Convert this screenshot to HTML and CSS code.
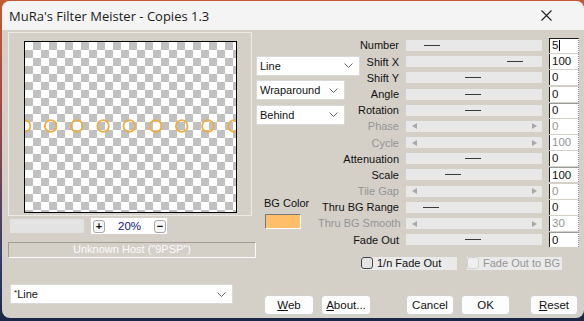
FILE: index.html
```html
<!DOCTYPE html>
<html lang="en">
<head>
    <meta charset="UTF-8">
    <title>MuRa's Filter Meister - Copies 1.3</title>
    <link rel="stylesheet" href="styles.css">
</head>
<body>
    <div class="window">
        <div class="titlebar">
            <span class="title">MuRa's Filter Meister - Copies 1.3</span>
            <svg class="close" width="11" height="11" viewBox="0 0 11 11">
                <path d="M0.5 0.5 L10.5 10.5 M10.5 0.5 L0.5 10.5" stroke="#1f1f1f" stroke-width="1.1" fill="none"/>
            </svg>
        </div>

        <div class="client">
            <!-- preview side -->
            <div class="left">
                <div class="frame">
                    <div class="preview">
                        <svg class="copies" width="211" height="170" viewBox="0 0 211 170">
                            <g fill="none" stroke="#efad40" stroke-width="1.8">
                                <circle cx="-0.5" cy="84" r="5.8"/>
                                <circle cx="25.7" cy="84" r="5.8"/>
                                <circle cx="51.9" cy="84" r="5.8"/>
                                <circle cx="78.1" cy="84" r="5.8"/>
                                <circle cx="104.3" cy="84" r="5.8"/>
                                <circle cx="130.5" cy="84" r="5.8"/>
                                <circle cx="156.7" cy="84" r="5.8"/>
                                <circle cx="182.9" cy="84" r="5.8"/>
                                <circle cx="209.1" cy="84" r="5.8"/>
                            </g>
                        </svg>
                    </div>
                </div>

                <div class="zoom-row">
                    <div class="progress"></div>
                    <div class="zoom">
                        <span class="zbtn">+</span>
                        <span class="zval">20%</span>
                        <span class="zbtn">&minus;</span>
                    </div>
                </div>

                <div class="host">Unknown Host ("9PSP")</div>

                <div class="combo preset">
                    <span><sup>*</sup>Line</span>
                    <svg width="9" height="5" viewBox="0 0 9 5"><path d="M0.5 0.5 L4.5 4.5 L8.5 0.5" stroke="#666" fill="none"/></svg>
                </div>
            </div>

            <!-- controls side -->
            <div class="right">
                <div class="params">
                    <div class="options">
                        <div class="combo line">
                            <span>Line</span>
                            <svg width="9" height="5" viewBox="0 0 9 5"><path d="M0.5 0.5 L4.5 4.5 L8.5 0.5" stroke="#666" fill="none"/></svg>
                        </div>
                        <div class="combo mode">
                            <span>Wraparound</span>
                            <svg width="9" height="5" viewBox="0 0 9 5"><path d="M0.5 0.5 L4.5 4.5 L8.5 0.5" stroke="#666" fill="none"/></svg>
                        </div>
                        <div class="combo mode">
                            <span>Behind</span>
                            <svg width="9" height="5" viewBox="0 0 9 5"><path d="M0.5 0.5 L4.5 4.5 L8.5 0.5" stroke="#666" fill="none"/></svg>
                        </div>
                        <div class="bg-label">BG Color</div>
                        <div class="swatch"></div>
                    </div>

                    <div class="label">Number</div>
                    <div class="track"><span class="thumb" style="left:18px"></span></div>
                    <div class="edit focus">5<span class="caret"></span></div>

                    <div class="label">Shift X</div>
                    <div class="track"><span class="thumb" style="left:101px"></span></div>
                    <div class="edit">100</div>

                    <div class="label">Shift Y</div>
                    <div class="track"><span class="thumb" style="left:59px"></span></div>
                    <div class="edit">0</div>

                    <div class="label">Angle</div>
                    <div class="track"><span class="thumb" style="left:59px"></span></div>
                    <div class="edit">0</div>

                    <div class="label">Rotation</div>
                    <div class="track"><span class="thumb" style="left:59px"></span></div>
                    <div class="edit top">0</div>

                    <div class="label off">Phase</div>
                    <div class="track off"><i class="arr l"></i><i class="arr r"></i></div>
                    <div class="edit off">0</div>

                    <div class="label off">Cycle</div>
                    <div class="track off"><i class="arr l"></i><i class="arr r"></i></div>
                    <div class="edit off">100</div>

                    <div class="label">Attenuation</div>
                    <div class="track"><span class="thumb" style="left:59px"></span></div>
                    <div class="edit">0</div>

                    <div class="label">Scale</div>
                    <div class="track"><span class="thumb" style="left:39px"></span></div>
                    <div class="edit top">100</div>

                    <div class="label off">Tile Gap</div>
                    <div class="track off"><i class="arr l"></i><i class="arr r"></i></div>
                    <div class="edit off">0</div>

                    <div class="label">Thru BG Range</div>
                    <div class="track"><span class="thumb" style="left:17px"></span></div>
                    <div class="edit">0</div>

                    <div class="label off">Thru BG Smooth</div>
                    <div class="track off"><i class="arr l"></i><i class="arr r"></i></div>
                    <div class="edit off">30</div>

                    <div class="label">Fade Out</div>
                    <div class="track"><span class="thumb" style="left:59px"></span></div>
                    <div class="edit top">0</div>
                </div>

                <div class="checks">
                    <label class="check"><span class="box"></span>1/n Fade Out</label>
                    <label class="check off"><span class="box"></span>Fade Out to BG</label>
                </div>

                <div class="buttons">
                    <button class="btn web"><u>W</u>eb</button>
                    <button class="btn about"><u>A</u>bout...</button>
                    <button class="btn cancel">Cancel</button>
                    <button class="btn ok">OK</button>
                    <button class="btn reset"><u>R</u>eset</button>
                </div>
            </div>
        </div>
    </div>
</body>
</html>
```

FILE: styles.css
```css
:root {
    --face: #d4d0c8;
    --track: #e8e8e8;
    --text-off: #959595;
    --ui-font: "Liberation Sans", Arial, sans-serif;
}

* {
    margin: 0;
    padding: 0;
    box-sizing: border-box;
}

html, body {
    width: 584px;
    height: 321px;
    overflow: hidden;
}

body {
    background: linear-gradient(180deg, #c45a34 0%, #93484a 40%, #34406a 80%, #1a2746 100%);
    font-family: var(--ui-font);
    font-size: 11px;
    color: #111;
}

.window {
    margin: 1px 0 0 2px;
    width: 582px;
    height: 317px;
    background: var(--face);
    border-radius: 8px;
    overflow: hidden;
    display: flex;
    flex-direction: column;
}

/* title bar */
.titlebar {
    height: 29px;
    background: #f4f4f4;
    display: flex;
    align-items: center;
    padding-left: 7px;
    flex-shrink: 0;
}

.title {
    font-family: "Segoe UI", "Open Sans", "Noto Sans", sans-serif;
    font-size: 13px;
    color: #1b1b1b;
}

.close {
    margin-left: auto;
    margin-right: 32px;
}

.client {
    display: flex;
    flex: 1;
}

/* left column */
.left {
    width: 254px;
    padding: 2px 0 0 6px;
    display: flex;
    flex-direction: column;
}

.frame {
    width: 244px;
    height: 184px;
    border: 1px solid #ecebe6;
    padding: 8px 0 0 15px;
}

.preview {
    width: 213px;
    height: 172px;
    border: 1px solid #000;
    background: repeating-conic-gradient(#c0c0c0 0 25%, #fff 0 50%) 0 0 / 16px 16px;
}

.copies {
    display: block;
}

.zoom-row {
    display: flex;
    align-items: center;
    height: 16px;
    margin-top: 2px;
}

.progress {
    width: 74px;
    height: 14px;
    margin-left: 2px;
    background: #e3e3e3;
}

.zoom {
    width: 76px;
    height: 16px;
    margin-left: 7px;
    background: #fff;
    display: flex;
    align-items: center;
    padding: 0 1px 0 2px;
}

.zbtn {
    width: 12px;
    height: 13px;
    border: 1px solid #a8a8a8;
    border-radius: 3px;
    background: #f6f6f6;
    font-weight: bold;
    font-size: 11px;
    line-height: 11px;
    text-align: center;
}

.zval {
    flex: 1;
    text-align: center;
    color: #10107a;
    font-size: 11.5px;
}

.host {
    width: 248px;
    height: 16px;
    margin-top: 8px;
    border-top: 1px solid #a29e96;
    border-left: 1px solid #a29e96;
    border-bottom: 1px solid #fbfbfb;
    border-right: 1px solid #fbfbfb;
    color: #fbfbfb;
    text-align: center;
    line-height: 13px;
}

/* combo boxes */
.combo {
    height: 20px;
    background: #fff;
    border: 1px solid #d9d9d9;
    display: flex;
    align-items: center;
    justify-content: space-between;
    padding: 0 6px 0 3px;
    flex-shrink: 0;
    white-space: nowrap;
}

.combo sup {
    font-size: 8px;
    vertical-align: 3px;
}

.preset {
    width: 223px;
    margin: 26px 0 0 2px;
}

.line {
    width: 104px;
}

.mode {
    width: 89px;
    margin-top: 4.5px;
}

/* parameter grid */
.right {
    flex: 1;
    padding-top: 7.4px;
    display: flex;
    flex-direction: column;
}

.params {
    display: grid;
    grid-template-columns: 55px 81px 136px 30px;
    grid-template-rows: repeat(13, 16.2px);
    column-gap: 7px;
}

.options {
    grid-column: 1;
    grid-row: 1 / span 13;
    display: flex;
    flex-direction: column;
    padding-top: 18.6px;
    width: 55px;
    overflow: visible;
}

.bg-label {
    margin: 72.5px 0 0 8px;
    line-height: 13px;
    white-space: nowrap;
}

.swatch {
    width: 36px;
    height: 15px;
    margin: 4px 0 0 9px;
    background: #ffbf6a;
    border-top: 1px solid #7a7a7a;
    border-left: 1px solid #7a7a7a;
    border-bottom: 1px solid #fff;
    border-right: 1px solid #fff;
}

.label {
    grid-column: 2;
    text-align: right;
    white-space: nowrap;
    line-height: 16.2px;
}

.label.off {
    color: var(--text-off);
}

.track {
    grid-column: 3;
    align-self: center;
    height: 11px;
    background: var(--track);
    position: relative;
}

.thumb {
    position: absolute;
    top: 5px;
    width: 16px;
    height: 1px;
    background: #3a3a3a;
}

.track.off {
    display: flex;
    align-items: center;
    justify-content: space-between;
    padding: 0 5px 0 6px;
}

.arr {
    width: 0;
    height: 0;
    border-top: 3px solid transparent;
    border-bottom: 3px solid transparent;
}

.arr.l {
    border-right: 5px solid #a8a8a8;
}

.arr.r {
    border-left: 5px solid #a8a8a8;
}

.edit {
    grid-column: 4;
    align-self: center;
    height: 15px;
    background: #fff;
    border-left: 1px solid #1e1e1e;
    border-right: 1px dotted #8a8a8a;
    padding-left: 2px;
    line-height: 15px;
    display: flex;
    align-items: center;
    font-size: 11.5px;
}

.edit.focus {
    border-top: 1px solid #1e1e1e;
}

.edit.top {
    border-top: 1px solid #9a9a9a;
}

.edit.off {
    color: var(--text-off);
}

.caret {
    width: 1px;
    height: 11px;
    background: #000;
    margin-left: 1px;
}

/* checkboxes */
.checks {
    display: flex;
    gap: 10px;
    margin-top: 9px;
    padding-left: 105px;
    height: 13px;
}

.check {
    display: flex;
    align-items: center;
    gap: 4px;
    background: #eaeaea;
    height: 13px;
    white-space: nowrap;
}

.check:first-child {
    width: 96px;
}

.check.off {
    width: 95px;
    color: var(--text-off);
}

.box {
    width: 12px;
    height: 12px;
    border: 1px solid #444;
    border-radius: 3px;
    background: #e4e4e4;
    flex-shrink: 0;
}

.check.off .box {
    border-color: #d2d2d2;
    background: #efefef;
}

/* buttons */
.buttons {
    display: flex;
    margin-top: 25px;
    padding-left: 8px;
    height: 20px;
}

.btn {
    height: 20px;
    border: 1px solid #d0d0d0;
    border-radius: 4px;
    background: #fdfdfd;
    font-family: var(--ui-font);
    font-size: 11.5px;
    color: #111;
    text-align: center;
}

.web { width: 50px; }
.about { width: 50px; margin-left: 7px; }
.cancel { width: 48px; margin-left: 35px; }
.ok { width: 49px; margin-left: 7px; }
.reset { width: 48px; margin-left: 20px; }
```
